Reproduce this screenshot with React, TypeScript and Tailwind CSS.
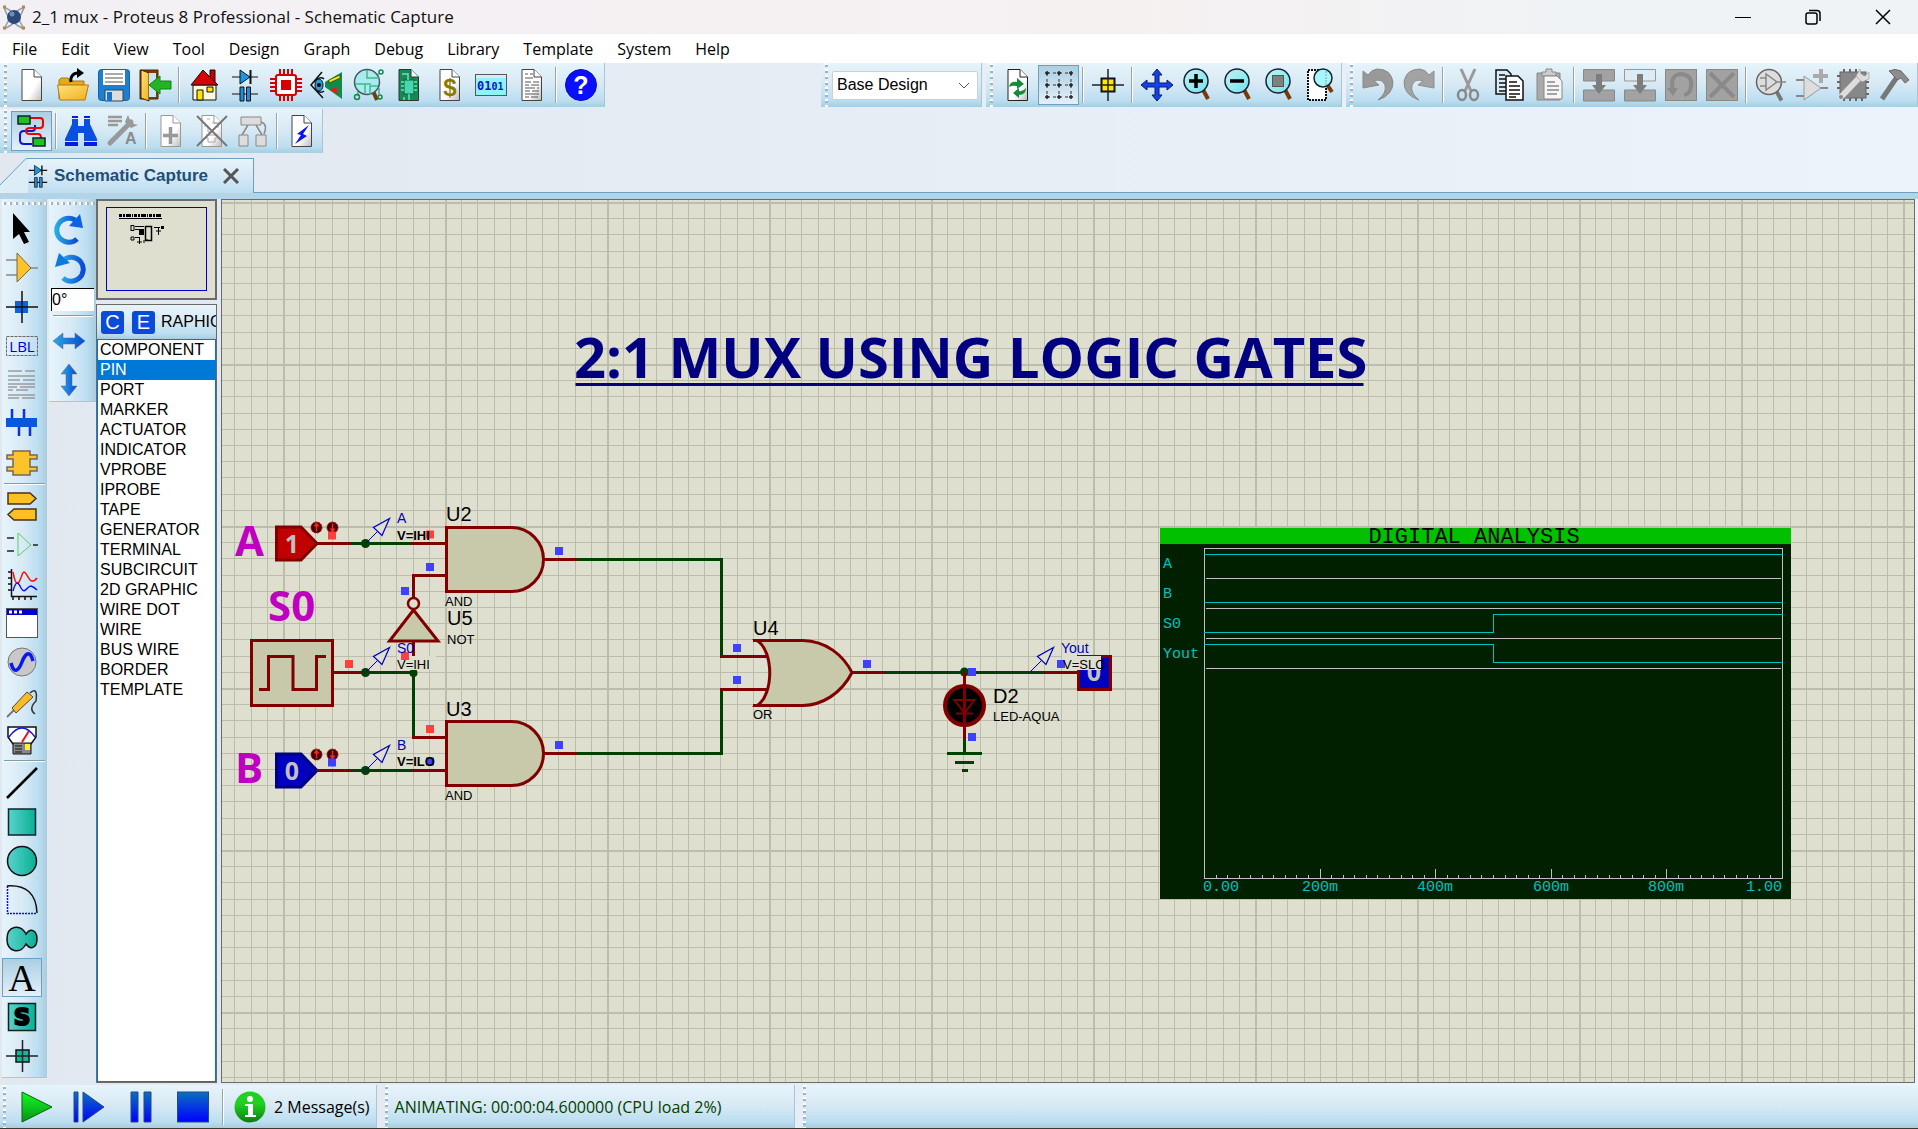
import React from "react";

const BAR =
  "bg-[linear-gradient(to_bottom,#e6f4fb_0%,#d9eaf5_45%,#bcdef1_85%,#aaccdf_100%)]";
const VBAR =
  "bg-[linear-gradient(to_right,#e6f4fb_0%,#d9eaf5_45%,#bcdef1_80%,#aaccdf_100%)]";
const PRESSED =
  "border border-[#6f9fbc] bg-[linear-gradient(to_bottom,#accfe3,#e3f0f8)]";

type IconProps = { children: React.ReactNode };
function Svg({ children }: IconProps) {
  return (
    <svg width="34" height="34" viewBox="0 0 34 34" fill="none" aria-hidden="true" className="shrink-0">
      {children}
    </svg>
  );
}

const page = "M7 1.5H19L26.5 9V32.5H7Z";
const fold = "M19 1.5V9H26.5";

function Page({ stroke = "#444", children }: { stroke?: string; children?: React.ReactNode }) {
  return (
    <>
      <path d={page} fill="url(#paper)" stroke={stroke} />
      {children}
      <path d={fold} fill="#fff" stroke={stroke} />
    </>
  );
}

function Lens({ cx = 15, cy = 13, r = 12, gray = false }: { cx?: number; cy?: number; r?: number; gray?: boolean }) {
  return (
    <>
      <path
        d={`M${cx + r * 0.6} ${cy + r * 0.75}L${cx + r} ${cy + r + 6}`}
        stroke={gray ? "#777" : "#7a3a05"}
        strokeWidth="4"
      />
      <circle cx={cx} cy={cy} r={r} fill={gray ? "#ddd" : "url(#lens)"} stroke={gray ? "#666" : "#123"} strokeWidth="1.5" />
    </>
  );
}

const diode = (
  <Svg>
    <path d="M4 9H30M4 26H30" stroke="#111" />
    <path d="M12 2V16L22 9Z" fill="#1c96e0" stroke="#111" />
    <path d="M22.5 2V16" stroke="#111" strokeWidth="2" />
    <path d="M12 19H16V33H12ZM18.500 19H22.500V33H18.500Z" fill="#1c8fe0" stroke="#111" />
  </Svg>
);

const icons: Record<string, React.ReactNode> = {
  "New project": (
    <Svg>
      <Page />
    </Svg>
  ),
  "Open project": (
    <Svg>
      <path d="M3 31V12L5 10H12L14 13H28V17" fill="#e8a818" stroke="#b07a10" />
      <path d="M1.500 17H32.500L29 32H4Z" fill="url(#gold)" stroke="#b07a10" />
      <path d="M15 14C14 9 17 5 22 5" stroke="#000" strokeWidth="3" />
      <path d="M21 0L28 5L21 10Z" fill="#000" />
    </Svg>
  ),
  "Save project": (
    <Svg>
      <rect x="1.500" y="1.500" width="31" height="31" rx="3" fill="#1c7fd0" stroke="#1b5fa8" />
      <path d="M6 2H28V17H6Z" fill="#fff" />
      <path d="M8 6H26M8 10H26M8 14H26" stroke="#555" />
      <path d="M8 22H26V33H8Z" fill="#ddd" stroke="#345" />
      <path d="M10 24H15V33H10Z" fill="#1b6fd0" />
    </Svg>
  ),
  "Close project": (
    <Svg>
      <path d="M2 2H20V31H2Z" fill="#7a3f00" stroke="#4a2800" />
      <path d="M3 2L11 5V33L3 30Z" fill="url(#gold)" stroke="#4a2800" />
      <path d="M11 5H18V29H11Z" fill="#c8e4f2" />
      <path d="M11 17L22 8V13H33V21H22V26Z" fill="#22b422" stroke="#128012" />
    </Svg>
  ),
  Home: (
    <Svg>
      <path d="M23 2H28V14H23Z" fill="#c80000" stroke="#111" />
      <path d="M6 17H29V32H6Z" fill="#fff8e0" stroke="#111" />
      <path d="M16 2L31 17H4Z" fill="#d80000" stroke="#111" />
      <path d="M10 22H16V32H10Z" fill="#ffe600" stroke="#111" />
      <path d="M20 19H26V24H20Z" fill="#ffe600" stroke="#111" />
    </Svg>
  ),
  "Schematic capture": diode,
  "PCB layout": (
    <Svg>
      <path d="M11 1V7M15 1V7M19 1V7M23 1V7M11 27V33M15 27V33M19 27V33M23 27V33M1 11H7M1 15H7M1 19H7M1 23H7M27 11H33M27 15H33M27 19H33M27 23H33" stroke="#d60000" strokeWidth="2" />
      <rect x="7" y="7" width="20" height="20" rx="2" fill="#fff" stroke="#d60000" strokeWidth="2" />
      <rect x="12" y="12" width="10" height="10" fill="#d60000" />
    </Svg>
  ),
  "3D visualizer": (
    <Svg>
      <path d="M12 4L1 17L13 30M4 14C8 9 12 9 14 11M4 20C8 25 12 25 14 23" stroke="#111" strokeWidth="1.500" />
      <ellipse cx="9" cy="17" rx="4" ry="6" fill="#2a9be0" stroke="#111" />
      <circle cx="9" cy="17" r="2" fill="#000" />
      <path d="M32 4V31L15 19V14Z" fill="#128a4a" />
      <path d="M19 12L30 7V10L19 15Z" fill="#ffe600" stroke="#111" strokeWidth=".5" />
      <path d="M20 22L26 19L28 26Z" fill="#ff1010" />
    </Svg>
  ),
  "Gerber viewer": (
    <Svg>
      <path d="M22 23L26 32" stroke="#7a3a05" strokeWidth="4" />
      <circle cx="16" cy="14" r="12.500" fill="#a9ecee" stroke="#456" strokeWidth="1.500" />
      <path d="M4 16H14V26M16 2V10H28M19 27V18H27M14 16H20" stroke="#48b490" strokeWidth="1.500" />
      <path d="M7 22V28M26 7L29 5M28 26V20" stroke="#128a4a" />
      <circle cx="6" cy="29" r="2.500" stroke="#128a4a" strokeWidth="1.500" />
      <circle cx="30" cy="4" r="2" stroke="#128a4a" strokeWidth="1.500" />
      <circle cx="29" cy="29" r="2" stroke="#128a4a" strokeWidth="1.500" />
    </Svg>
  ),
  "Design explorer": (
    <Svg>
      <path d={page} fill="#158a55" stroke="#333" />
      <path d={fold} fill="#fff" stroke="#333" />
      <rect x="12" y="12" width="10" height="14" fill="#4ad6b0" stroke="#063" />
      <path d="M9 14H12M9 18H12M9 22H12M22 14H25M22 18H25M22 22H25M10 6H16V12M12 29V32M17 26V32" stroke="#6de0c0" strokeWidth="1.500" />
    </Svg>
  ),
  "Bill of materials": (
    <Svg>
      <Page>
        <text x="17" y="28" textAnchor="middle" fontSize="24" className="fill-[#8a7a00] font-['Liberation_Sans'] font-bold">$</text>
      </Page>
    </Svg>
  ),
  "Source code": (
    <Svg>
      <rect x="1.500" y="6.500" width="31" height="21" fill="#8ff2f6" stroke="#556" />
      <path d="M2 7H32V10H2Z" fill="#e6e6e6" />
      <text x="3" y="22" fontSize="12" className="fill-[#0018c8] font-['DejaVu_Sans_Mono'] font-bold">01<tspan fontSize="10">01</tspan></text>
    </Svg>
  ),
  "Project notes": (
    <Svg>
      <Page>
        <path d="M10 6H13M15 6H18M10 10H18M10 14H16M18 14H24M10 17H14M16 17H24M10 20H20M22 20H24M10 23H15M17 23H24M10 26H24M10 29H14M16 29H23" stroke="#555" />
      </Page>
    </Svg>
  ),
  Help: (
    <Svg>
      <circle cx="17" cy="17" r="15.500" fill="#0a10ff" stroke="#0610b0" />
      <text x="17" y="26" textAnchor="middle" fontSize="25" className="fill-white font-['Liberation_Sans'] font-bold">?</text>
    </Svg>
  ),
  "Wire autorouter": (
    <Svg>
      <path d="M20 11V14Q20 17 17 17H9Q5 17 5 21V26Q5 30 9 30H17" stroke="#1010e0" strokeWidth="2" />
      <path d="M15 4H25Q28 4 28 7V11Q28 14 25 14H15Q11 14 11 17Q11 20 15 20H23Q26 20 26 24" stroke="#f00000" strokeWidth="2" />
      <path d="M3 2H15V10H3ZM18 24H30V32H18Z" fill="#1ec41e" stroke="#123" strokeWidth="1.500" />
    </Svg>
  ),
  "Search and tag": (
    <Svg>
      <path d="M8 5H14V12H20V5H26V10L33 25V27H20V19H14V27H1V25L8 10Z" fill="#0a50e0" />
      <path d="M1 28H14V32H1ZM20 28H33V32H20ZM8 2H14V4H8ZM20 2H26V4H20Z" fill="#0818e8" />
    </Svg>
  ),
  "Property assignment": (
    <Svg>
      <path d="M3 3H17M3 7H17M3 11H13" stroke="#999" strokeWidth="2.500" />
      <path d="M5 29L26 8" stroke="#999" strokeWidth="5" strokeLinecap="round" />
      <path d="M23 1L20 8L26 14L33 11L29 10L25 6Z" fill="#999" />
      <text x="20" y="30" fontSize="16" className="fill-[#8a8a8a] font-['Liberation_Sans'] font-bold">A</text>
    </Svg>
  ),
  "New sheet": (
    <Svg>
      <Page stroke="#999">
        <path d="M16.500 13V30M9 21.500H24" stroke="#999" strokeWidth="3.500" />
      </Page>
    </Svg>
  ),
  "Remove sheet": (
    <Svg>
      <Page stroke="#999">
        <path d="M12 5H15M9 12H13V18H17M17 9H23V14M9 24H13V28H20V24H24M11 21H23" stroke="#aaa" />
      </Page>
      <path d="M2 2L32 32M32 2L2 32" stroke="#777" strokeWidth="2" />
    </Svg>
  ),
  "Sheet hierarchy": (
    <Svg>
      <path d="M12 11L6 21M20 11L26 21M25 8Q32 10 28 20" stroke="#888" strokeWidth="1.500" />
      <path d="M5 3H25V11H5ZM3 21H12V32H3ZM20 21H30V32H20Z" fill="#ddd" stroke="#888" />
    </Svg>
  ),
  "Electrical rules check": (
    <Svg>
      <Page>
        <path d="M24 11L12 20L16 21L10 30L22 22L18 20Z" fill="#0a10f0" />
      </Page>
    </Svg>
  ),
  Redraw: (
    <Svg>
      <Page stroke="#222">
        <path d="M8 19Q9 13 16 14V10L23 16L16 21V18Q11 17 8 19Z" fill="#138a3c" />
        <path d="M25 20Q25 27 18 27V30L12 25L18 20V23Q22 24 25 20Z" fill="#138a3c" />
      </Page>
    </Svg>
  ),
  "Toggle grid": (
    <Svg>
      <path d="M5 5H29M5 17H29M5 29H29M5 5V29M17 5V29M29 5V29" stroke="#333" strokeDasharray="3 3" />
      <path
        d="M3 5H7M15 5H19M27 5H31M3 17H7M15 17H19M27 17H31M3 29H7M15 29H19M27 29H31M5 3V7M5 15V19M5 27V31M17 3V7M17 15V19M17 27V31M29 3V7M29 15V19M29 27V31"
        stroke="#222"
        strokeWidth="1.500"
      />
    </Svg>
  ),
  "False origin": (
    <Svg>
      <path d="M10.500 10.500H23.500V23.500H10.500Z" fill="#ffe800" stroke="#111" strokeWidth="2" />
      <path d="M1 17H33M17 1V33" stroke="#222" strokeWidth="1.500" />
    </Svg>
  ),
  "Centre at cursor": (
    <Svg>
      <path
        d="M17 1L22 7H19V15H27V12L33 17L27 22V19H19V27H22L17 33L12 27H15V19H7V22L1 17L7 12V15H15V7H12Z"
        fill="#1340f0"
        stroke="#0a1c60"
      />
    </Svg>
  ),
  "Zoom in": (
    <Svg>
      <Lens />
      <path d="M8 13H22M15 6V20" stroke="#000" strokeWidth="3.500" />
    </Svg>
  ),
  "Zoom out": (
    <Svg>
      <Lens />
      <path d="M8 13H22" stroke="#000" strokeWidth="3.500" />
    </Svg>
  ),
  "Zoom all": (
    <Svg>
      <Lens />
      <rect x="9.500" y="7.500" width="11" height="11" fill="#808080" stroke="#555" />
    </Svg>
  ),
  "Zoom area": (
    <Svg>
      <rect x="4" y="2" width="18" height="30" fill="#fff" stroke="#111" strokeWidth="2" strokeDasharray="2 1" />
      <path d="M24 18L28 24" stroke="#7a3a05" strokeWidth="4" />
      <circle cx="19" cy="10" r="9" fill="#a8f6fa" stroke="#123" strokeWidth="1.500" />
      <path d="M22 3V18" stroke="#68b0b8" strokeDasharray="2 1" />
    </Svg>
  ),
  Undo: (
    <Svg>
      <path d="M2 3V20L18 17L13 13Q21 10 24 17Q26 25 17 32Q32 27 32 14Q30 1 16 1Q10 2 7 7Z" fill="#999" stroke="#888" />
    </Svg>
  ),
  Redo: (
    <Svg>
      <path d="M32 3V20L16 17L21 13Q13 10 10 17Q8 25 17 32Q2 27 2 14Q4 1 18 1Q24 2 27 7Z" fill="#a3a3a3" stroke="#8c8c8c" />
    </Svg>
  ),
  Cut: (
    <Svg>
      <path d="M10 1L20 23M24 1L14 23" stroke="#999" strokeWidth="3" />
      <ellipse cx="11" cy="27" rx="4" ry="5" stroke="#888" strokeWidth="2.500" />
      <ellipse cx="23" cy="27" rx="4" ry="5" stroke="#888" strokeWidth="2.500" />
    </Svg>
  ),
  Copy: (
    <Svg>
      <path d="M4 2H15L19 6V26H4Z" fill="#d4eef8" stroke="#111" strokeWidth="1.500" />
      <path d="M7 7H13M7 11H16M7 15H16M7 19H16M7 23H14" stroke="#111" strokeWidth="1.500" />
      <path d="M14 8H26L31 13V32H14Z" fill="#fff" stroke="#111" strokeWidth="1.500" />
      <path d="M17 14H25M17 18H28M17 22H28M17 26H28M17 29H24" stroke="#111" strokeWidth="1.500" />
    </Svg>
  ),
  Paste: (
    <Svg>
      <path d="M4 5H27V32H4Z" fill="#aaa" stroke="#888" />
      <path d="M9 4H13V1H19V4H23V8H9Z" fill="#ccc" stroke="#888" />
      <path d="M11 8H24L29 13V31H11Z" fill="#f6f6f6" stroke="#888" />
      <path d="M14 14H22M14 18H26M14 22H26M14 26H24" stroke="#888" strokeWidth="1.500" />
    </Svg>
  ),
  "Block copy": (
    <Svg>
      <path d="M1.500 1.500H32.500V13H1.500ZM1.500 22H32.500V33H1.500Z" fill="#a2a2a2" stroke="#888" />
      <path d="M14 6H20V17H24L17 26L10 17H14Z" fill="#7d7d7d" />
    </Svg>
  ),
  "Block move": (
    <Svg>
      <path d="M1.500 22H32.500V33H1.500Z" fill="#a2a2a2" stroke="#888" />
      <path d="M1.500 1.500H32.500V13H1.500Z" fill="#dcebf4" stroke="#999" />
      <path d="M14 6H20V17H24L17 26L10 17H14Z" fill="#7d7d7d" />
    </Svg>
  ),
  "Block rotate": (
    <Svg>
      <rect x="1.500" y="1.500" width="31" height="31" fill="#a2a2a2" stroke="#888" />
      <path d="M9 23Q5 6 18 6Q29 8 27 19Q26 26 20 27" stroke="#8a8a8a" strokeWidth="4" />
      <path d="M3 20H14L9 28Z" fill="#8a8a8a" />
    </Svg>
  ),
  "Block delete": (
    <Svg>
      <rect x="1.500" y="1.500" width="31" height="31" fill="#a2a2a2" stroke="#888" />
      <path d="M5 5L29 29M29 5L5 29" stroke="#8a8a8a" strokeWidth="4" />
    </Svg>
  ),
  "Pick parts": (
    <Svg>
      <Lens cx={15} cy={14} r={12.5} gray />
      <path d="M6 10H12M6 18H12M12 6V22L23 14ZM21 14H32" stroke="#888" strokeWidth="1.500" />
    </Svg>
  ),
  "Make device": (
    <Svg>
      <path d="M1 12H9M1 28H9M24 20H33" stroke="#888" strokeWidth="2" />
      <path d="M9 8V32L26 20Z" fill="#ddd" stroke="#999" />
      <path d="M26 1V15M18 8H33" stroke="#aaa" strokeWidth="4" />
    </Svg>
  ),
  "Packaging tool": (
    <Svg>
      <path d="M8 1V4M14 1V4M20 1V4M8 30V33M14 30V33M20 30V33M26 30V33M1 8H4M1 14H4M1 20H4M30 14H33M30 20H33M30 26H33" stroke="#666" strokeWidth="2" />
      <rect x="4" y="4" width="26" height="26" fill="#888" stroke="#666" />
      <path d="M5 29L24 9" stroke="#ddd" strokeWidth="6" strokeLinecap="round" />
      <path d="M24 1L20 8L26 14L33 11V4L29 8L25 6Z" fill="#ddd" stroke="#888" strokeWidth=".5" />
      <circle cx="5" cy="29" r="2" fill="#888" />
    </Svg>
  ),
  Decompose: (
    <Svg>
      <path d="M20 9L5 31" stroke="#777" strokeWidth="5" />
      <path d="M12 3Q18 0 24 3L32 12L28 15L24 10L20 12L16 7Z" fill="#8d8d8d" stroke="#666" />
    </Svg>
  ),
  "Selection mode": (
    <Svg>
      <path d="M8 1V27L14 22L19 32L24 30L19 20L25 20Z" fill="#000" />
    </Svg>
  ),
  "Component mode": (
    <Svg>
      <path d="M1 9H12M1 24H12M24 17H33" stroke="#888" strokeWidth="1.500" />
      <path d="M12 2V31L26 17Z" fill="#fcc428" stroke="#765" />
    </Svg>
  ),
  "Junction dot mode": (
    <Svg>
      <rect x="10" y="11" width="13" height="12" fill="#0d62e0" />
      <path d="M1 17H33M17 1V33" stroke="#111" strokeWidth="1.500" />
    </Svg>
  ),
  "Wire label mode": (
    <Svg>
      <rect x="1.500" y="7.500" width="31" height="19" stroke="#666" strokeDasharray="3 1" />
      <text x="17" y="23" textAnchor="middle" fontSize="15" className="fill-[#0000d8] font-['Open_Sans'] font-medium">LBL</text>
    </Svg>
  ),
  "Text script mode": (
    <Svg>
      <path d="M3 3H17M20 3H30M3 8H30M3 12H15M18 12H30M3 16H30M3 19H12M15 19H30M3 22H8M11 22H23M3 27H30M3 30H14M17 30H30" stroke="#777" />
    </Svg>
  ),
  "Buses mode": (
    <Svg>
      <path d="M7 2V12M19 2V12M14 18V29M25 18V29" stroke="#0a30f0" strokeWidth="2.500" />
      <rect x="1" y="11" width="31" height="9" fill="#0a56dc" />
    </Svg>
  ),
  "Subcircuit mode": (
    <Svg>
      <path d="M8 5H25V9H32V13H25V21H32V25H25V29H8V25H2V21H8V13H2V9H8Z" fill="#fcc428" stroke="#765" strokeWidth="1.500" />
    </Svg>
  ),
  "Terminals mode": (
    <Svg>
      <path d="M3 4H25L31 9.500L25 15H3ZM31 20H9L3 25.500L9 31H31Z" fill="#fcbf24" stroke="#432" strokeWidth="1.500" />
    </Svg>
  ),
  "Device pins mode": (
    <Svg>
      <path d="M2 10H9M2 23H9M28 17H33" stroke="#222" strokeWidth="1.500" />
      <path d="M13 5V28L26 17Z" stroke="#58cf68" />
    </Svg>
  ),
  "Graph mode": (
    <Svg>
      <path d="M6.500 2V29.500H32M3 5H6M3 11H6M3 17H6M3 23H6M8 30V33M14 30V33M20 30V33M26 30V33" stroke="#111" strokeWidth="1.500" />
      <path d="M8 5C11 22 14 17 17 8C20 -1 23 14 27 14Q30 14 32 11" stroke="#f01010" strokeWidth="1.500" />
      <path d="M8 24C11 13 13 15 16 21C20 28 22 19 26 19Q29 20 32 23" stroke="#1010f0" strokeWidth="1.500" />
    </Svg>
  ),
  "Active popup mode": (
    <Svg>
      <rect x="1.500" y="2.500" width="31" height="29" fill="#fff" stroke="#555" />
      <path d="M2 3H32V9H2Z" fill="#0000d0" />
      <path d="M4 6H7M9 6H12M14 6H17" stroke="#fff" strokeWidth="3" />
    </Svg>
  ),
  "Generator mode": (
    <Svg>
      <circle cx="17" cy="17" r="14" fill="#c8c8c8" stroke="#777" />
      <path d="M6 18C9 30 14 25 17 17S25 4 28 16" stroke="#0818f0" strokeWidth="3.500" />
    </Svg>
  ),
  "Probe mode": (
    <Svg>
      <path d="M2 33L9 26" stroke="#777" strokeWidth="2" />
      <path d="M7 24L22 8L28 13L11 29Z" fill="#f6bc28" stroke="#543" />
      <path d="M25 9Q33 2 31 17Q23 25 30 30" stroke="#333" strokeWidth="1.500" />
    </Svg>
  ),
  "Instruments mode": (
    <Svg>
      <path d="M3 4H31V14L26 21H8L3 14Z" fill="#fff" stroke="#111" strokeWidth="1.500" />
      <path d="M4 14Q17 -4 30 14" stroke="#1010f0" strokeWidth="1.500" />
      <path d="M17 19L24 8" stroke="#f01010" strokeWidth="2" />
      <path d="M8 20H26V31H8Z" fill="#888" stroke="#111" />
      <path d="M10 23H17M10 26H17M10 29H17" stroke="#111" />
      <path d="M20 21H25V27H20Z" fill="#fff030" />
    </Svg>
  ),
  "2D line": (
    <Svg>
      <path d="M2 32L32 2" stroke="#000" strokeWidth="2.500" />
    </Svg>
  ),
  "2D box": (
    <Svg>
      <rect x="3.500" y="4" width="27" height="26" fill="url(#teal)" stroke="#123" strokeWidth="1.500" />
    </Svg>
  ),
  "2D circle": (
    <Svg>
      <circle cx="17" cy="17" r="14.500" fill="url(#teal)" stroke="#111" strokeWidth="1.500" />
    </Svg>
  ),
  "2D arc": (
    <Svg>
      <path d="M2.500 3V30.500H32" stroke="#1010e0" strokeWidth="1.500" strokeDasharray="2 1" />
      <path d="M2 3Q31 1 32 30" stroke="#111" strokeWidth="1.500" />
    </Svg>
  ),
  "2D path": (
    <Svg>
      <path d="M21 12C15 1 2 4 2 17S15 33 21 22C26 29 32 25 32 17S26 5 21 12Z" fill="url(#teal)" stroke="#111" strokeWidth="1.500" />
    </Svg>
  ),
  "2D text": (
    <Svg>
      <text x="17" y="30" textAnchor="middle" fontSize="38" className="fill-black font-['Liberation_Serif']">A</text>
    </Svg>
  ),
  "2D symbol": (
    <Svg>
      <rect x="3.500" y="3.500" width="27" height="27" fill="url(#teal)" stroke="#122" strokeWidth="1.500" />
      <text x="17" y="25" textAnchor="middle" fontSize="23" strokeWidth="2" className="fill-black stroke-black font-['DejaVu_Sans'] font-bold">S</text>
    </Svg>
  ),
  "2D marker": (
    <Svg>
      <rect x="11" y="11" width="13" height="12" fill="#10b8a0" stroke="#111" strokeWidth="1.500" />
      <path d="M1 17H33M17.500 1V33" stroke="#222" strokeWidth="1.500" />
    </Svg>
  ),
  "Rotate clockwise": (
    <Svg>
      <path d="M25 27A12 12 0 1 1 23 8" stroke="url(#blue)" strokeWidth="5" />
      <path d="M28 2L31 16L17 14Z" fill="#0c62e0" />
    </Svg>
  ),
  "Rotate anti-clockwise": (
    <Svg>
      <path d="M9 27A12 12 0 1 0 11 8" stroke="url(#blue)" strokeWidth="5" transform="translate(2 0)" />
      <path d="M7 2L3 16L18 12Z" fill="#0c7ae0" />
    </Svg>
  ),
  "X-mirror": (
    <Svg>
      <path d="M1 17L11 9V14H23V9L33 17L23 25V20H11V25Z" fill="url(#blue)" stroke="#667" strokeWidth=".5" />
    </Svg>
  ),
  "Y-mirror": (
    <Svg>
      <path d="M17 1L25 11H20V23H25L17 33L9 23H14V11H9Z" fill="url(#blue)" stroke="#667" strokeWidth=".5" />
    </Svg>
  ),
};

function ToolButton({ name, active = false, vertical = false }: { name: string; active?: boolean; vertical?: boolean }) {
  return (
    <button
      type="button"
      aria-label={name}
      title={name}
      className={`flex shrink-0 items-center justify-center ${vertical ? "h-[39px] w-10" : "h-10 w-[41px]"} ${active ? PRESSED : ""}`}
    >
      {icons[name]}
    </button>
  );
}

function Grip() {
  return (
    <span className="mr-1 w-[3px] shrink-0 self-stretch bg-[repeating-linear-gradient(to_bottom,#ffffff_0_2px,#9fb3c0_2px_4px,transparent_4px_6px)]" />
  );
}

function Rule() {
  return <span className="mx-[3px] h-9 w-[2px] shrink-0 border-l border-[#9aa3a8] bg-white" />;
}

function Strip({ groups, active, roomy = false }: { groups: string[][]; active?: string; roomy?: boolean }) {
  return (
    <div className={`flex h-11 items-center border-r border-[#a9c6d8] pl-1 ${roomy ? "pr-[3px]" : ""} ${BAR}`}>
      <Grip />
      {groups.map((group, i) => (
        <React.Fragment key={group[0]}>
          {i > 0 && <Rule />}
          {group.map((name) => (
            <ToolButton key={name} name={name} active={name === active} />
          ))}
        </React.Fragment>
      ))}
    </div>
  );
}

function Gradients() {
  return (
    <svg width="0" height="0" className="absolute" aria-hidden="true">
      <defs>
        <linearGradient id="paper" x1="0" y1="0" x2="1" y2="1">
          <stop offset=".6" stopColor="#fff" />
          <stop offset="1" stopColor="#bbb" />
        </linearGradient>
        <linearGradient id="gold" x1="0" y1="0" x2="1" y2="1">
          <stop offset="0" stopColor="#ffe27a" />
          <stop offset="1" stopColor="#f0b020" />
        </linearGradient>
        <linearGradient id="lens" x1="0" y1="0" x2="1" y2="1">
          <stop offset="0" stopColor="#c8f0f2" />
          <stop offset="1" stopColor="#6fe4ee" />
        </linearGradient>
        <linearGradient id="teal" x1="0" y1="0" x2="1" y2="0">
          <stop offset="0" stopColor="#5ad2cc" />
          <stop offset="1" stopColor="#08b094" />
        </linearGradient>
        <linearGradient id="blue" x1="0" y1="0" x2="1" y2="0">
          <stop offset="0" stopColor="#28a8e4" />
          <stop offset="1" stopColor="#0a48d8" />
        </linearGradient>
        <linearGradient id="play" x1="0" y1="0" x2="0" y2="1">
          <stop offset="0" stopColor="#10ff20" />
          <stop offset="1" stopColor="#089018" />
        </linearGradient>
        <linearGradient id="run" x1="0" y1="0" x2="0" y2="1">
          <stop offset="0" stopColor="#0a70c0" />
          <stop offset="1" stopColor="#0000ff" />
        </linearGradient>
        <linearGradient id="info" x1="0" y1="0" x2="0" y2="1">
          <stop offset=".4" stopColor="#22d022" />
          <stop offset="1" stopColor="#088008" />
        </linearGradient>
      </defs>
    </svg>
  );
}

function TitleBar() {
  return (
    <header className="flex h-[34px] items-center bg-[linear-gradient(to_right,#f3f0f5,#f6f1f1_58%,#eff3f6_85%)] font-['Open_Sans',sans-serif] text-[17px] text-[#111]">
      <svg width="24" height="30" viewBox="0 0 24 30" className="ml-[2px] shrink-0" aria-hidden="true">
        <path d="M2 5Q14 10 22 27M22 5Q10 10 2 27M2 5Q6 20 22 27M22 5Q18 20 2 27" fill="none" stroke="#98a0ac" strokeWidth="1.500" />
        <circle cx="12" cy="15" r="7" fill="#2a4878" />
        <circle cx="10" cy="12" r="2.500" fill="#6f8cba" />
        <path d="M1 5H4M20 5H23M1 26H4M20 26H23" stroke="#b48a3c" strokeWidth="3" />
      </svg>
      <h1 className="ml-[6px] whitespace-nowrap">2_1 mux - Proteus 8 Professional - Schematic Capture</h1>
      <div className="ml-auto flex h-full">
        <button type="button" aria-label="Minimize" className="flex w-[70px] items-center justify-center">
          <svg width="16" height="16" viewBox="0 0 16 16" fill="none" stroke="#000"><path d="M0 8.500H16" /></svg>
        </button>
        <button type="button" aria-label="Restore" className="flex w-[70px] items-center justify-center">
          <svg width="16" height="16" viewBox="0 0 16 16" fill="none" stroke="#000" strokeWidth="1.500">
            <rect x="1" y="4" width="11" height="11" rx="2" />
            <path d="M4 1.500H12Q15 1.500 15 4.500V12" />
          </svg>
        </button>
        <button type="button" aria-label="Close" className="flex w-[70px] items-center justify-center">
          <svg width="16" height="16" viewBox="0 0 16 16" fill="none" stroke="#000" strokeWidth="1.500"><path d="M1 1L15 15M15 1L1 15" /></svg>
        </button>
      </div>
    </header>
  );
}

const menus = ["File", "Edit", "View", "Tool", "Design", "Graph", "Debug", "Library", "Template", "System", "Help"];

function MenuBar() {
  return (
    <nav className="flex h-[29px] items-center bg-white font-['Open_Sans',sans-serif] text-base text-black">
      {menus.map((m) => (
        <button key={m} type="button" className="px-3">
          {m}
        </button>
      ))}
    </nav>
  );
}

function Toolbars() {
  return (
    <div className="flex flex-col gap-[2px]">
      <div className="flex gap-1">
        <Strip
          roomy
          groups={[
            ["New project", "Open project", "Save project", "Close project"],
            ["Home", "Schematic capture", "PCB layout", "3D visualizer", "Gerber viewer", "Design explorer", "Bill of materials", "Source code", "Project notes"],
            ["Help"],
          ]}
        />
        <div className={`ml-auto flex h-11 items-center border-r border-[#a9c6d8] pr-[3px] pl-1 ${BAR}`}>
          <Grip />
          <div className="relative">
            <select
              aria-label="Design variant"
              className="h-[29px] w-[146px] appearance-none rounded-[2px] border border-[#cfcfcf] bg-white px-1 font-['Liberation_Sans',sans-serif] text-base text-black"
            >
              <option>Base Design</option>
            </select>
            <svg width="12" height="8" viewBox="0 0 12 8" fill="none" stroke="#555" className="pointer-events-none absolute top-[11px] right-2"><path d="M1 1L6 6L11 1" /></svg>
          </div>
        </div>
        <Strip
          active="Toggle grid"
          groups={[["Redraw", "Toggle grid"], ["False origin"], ["Centre at cursor", "Zoom in", "Zoom out", "Zoom all", "Zoom area"]]}
        />
        <Strip
          roomy
          groups={[
            ["Undo", "Redo"],
            ["Cut", "Copy", "Paste"],
            ["Block copy", "Block move", "Block rotate", "Block delete"],
            ["Pick parts", "Make device", "Packaging tool", "Decompose"],
          ]}
        />
      </div>
      <div className="flex">
        <Strip
          active="Wire autorouter"
          groups={[["Wire autorouter"], ["Search and tag", "Property assignment"], ["New sheet", "Remove sheet", "Sheet hierarchy"], ["Electrical rules check"]]}
        />
      </div>
    </div>
  );
}

function TabRow() {
  return (
    <div className="mt-[5px]">
      <div className="flex h-[35px] border-b border-[#6f9fbc]">
        <svg width="28" height="35" viewBox="0 0 28 35" aria-hidden="true" className="-mb-px shrink-0">
          <path d="M0 27L27 .5H28V35H0Z" fill="#dcedf7" />
          <path d="M0 27L26 .5H28" fill="none" stroke="#6f9fbc" />
        </svg>
        <div className="-mb-px flex items-center border-t border-r border-[#6f9fbc] bg-[linear-gradient(to_bottom,#e6f4fb,#d9eaf5_45%,#bcdef1)] pr-[14px] font-['Liberation_Sans',sans-serif] text-[17px] font-bold text-[#204f78]">
          <svg width="20" height="24" viewBox="3 0 28 34" fill="none" aria-hidden="true">
            <path d="M4 9H30M4 26H30" stroke="#111" strokeWidth="1.500" />
            <path d="M12 2V16L22 9Z" fill="#1c96e0" stroke="#111" />
            <path d="M22.500 2V16" stroke="#111" strokeWidth="2" />
            <path d="M12 19H16V33H12ZM19 19H23V33H19Z" fill="#1c8fe0" stroke="#111" />
          </svg>
          <button type="button" className="ml-[6px] whitespace-nowrap">Schematic Capture</button>
          <button type="button" aria-label="Close tab" className="ml-[15px]">
            <svg width="16" height="16" viewBox="0 0 16 16" fill="none" stroke="#555" strokeWidth="3"><path d="M1 1L15 15M15 1L1 15" /></svg>
          </button>
        </div>
      </div>
      <div className="h-[6px] bg-[#b3d3e7]" />
    </div>
  );
}

const modeGroups = [
  ["Selection mode", "Component mode", "Junction dot mode", "Wire label mode", "Text script mode", "Buses mode", "Subcircuit mode"],
  ["Terminals mode", "Device pins mode", "Graph mode", "Active popup mode", "Generator mode", "Probe mode", "Instruments mode"],
  ["2D line", "2D box", "2D circle", "2D arc", "2D path", "2D text", "2D symbol", "2D marker"],
];

function HGrip() {
  return (
    <span className="mt-[3px] mb-1 h-[3px] shrink-0 self-stretch bg-[repeating-linear-gradient(to_right,#ffffff_0_2px,#9fb3c0_2px_4px,transparent_4px_6px)]" />
  );
}

function ModeBar() {
  return (
    <div className={`ml-[2px] flex w-[45px] shrink-0 flex-col self-start border-b border-[#a9c6d8] pb-[2px] ${VBAR}`}>
      <HGrip />
      {modeGroups.map((group, i) => (
        <React.Fragment key={group[0]}>
          {i > 0 && <span className="my-px ml-[2px] h-[2px] w-[41px] border-t border-[#8f989d] bg-white" />}
          {group.map((name) => (
            <ToolButton key={name} name={name} vertical active={name === "2D text"} />
          ))}
        </React.Fragment>
      ))}
    </div>
  );
}

function OrientationBar() {
  return (
    <div className={`ml-[2px] flex w-[47px] shrink-0 flex-col self-start border-b border-[#a9c6d8] pb-[2px] ${VBAR}`}>
      <HGrip />
      <ToolButton name="Rotate clockwise" vertical />
      <ToolButton name="Rotate anti-clockwise" vertical />
      <input
        aria-label="Rotation angle"
        defaultValue="0°"
        className="mt-px ml-[2px] h-[23px] w-[43px] border-t border-l border-black bg-white font-['Liberation_Sans',sans-serif] text-base text-black outline-none"
      />
      <span className="my-1 ml-1 h-[2px] w-10 border-t border-[#8f989d] bg-white" />
      <ToolButton name="X-mirror" vertical />
      <ToolButton name="Y-mirror" vertical />
    </div>
  );
}

const styles = [
  "COMPONENT", "PIN", "PORT", "MARKER", "ACTUATOR", "INDICATOR", "VPROBE", "IPROBE", "TAPE",
  "GENERATOR", "TERMINAL", "SUBCIRCUIT", "2D GRAPHIC", "WIRE DOT", "WIRE", "BUS WIRE", "BORDER", "TEMPLATE",
];

function SidePanel() {
  return (
    <aside className="flex w-[121px] shrink-0 flex-col font-['Liberation_Sans',sans-serif]">
      <div className="h-[101px] shrink-0 border-2 border-[#6b6b6b] bg-[#dfdfcf]">
        <svg width="117" height="97" viewBox="0 0 117 97" fill="none" aria-label="Sheet overview">
          <rect x="8.500" y="6.500" width="100" height="83" stroke="#0000c8" />
          <path d="M21 14.500H64" stroke="#000" strokeWidth="3" strokeDasharray="3 1 2 1 5 1 1 1" />
          <path d="M21 17.500H64M33 24V30M33 24.500H36V29.500H33M37 25.500H46M37 28.500H46M33 36H36V39H33ZM37 36.500H42M41.500 36V43M39 41H44M46 39V42M48 39H50" stroke="#000" />
          <path d="M41 29H46V34H41Z" fill="#000" />
          <rect x="47.500" y="25.500" width="6" height="14" stroke="#000" strokeWidth="1.500" />
          <path d="M56 26.500H62M60.500 26V34M58 30H63" stroke="#000" />
          <path d="M63 25H66V28H63Z" fill="#000" />
        </svg>
      </div>
      <div className="mt-1 flex min-h-0 flex-1 flex-col border border-[#6b6b6b]">
        <div className={`flex h-[34px] shrink-0 items-center overflow-hidden pl-1 text-base text-black ${BAR}`}>
          <button type="button" aria-label="Create" className="mr-2 h-[23px] w-[23px] shrink-0 rounded-[3px] bg-[#0a4bd8] text-xl leading-[23px] text-white">C</button>
          <button type="button" aria-label="Edit" className="mr-[6px] h-[23px] w-[23px] shrink-0 rounded-[3px] bg-[#0a4bd8] text-xl leading-[23px] text-white">E</button>
          <span>RAPHICS</span>
        </div>
        <ul role="listbox" aria-label="Graphic styles" className="flex-1 overflow-hidden border border-[#0078d7] bg-white text-base leading-5 text-black">
          {styles.map((s) => (
            <li key={s} role="option" aria-selected={s === "PIN"} className={s === "PIN" ? "bg-[#0078d7] pl-[2px] text-white" : "pl-[2px]"}>
              {s}
            </li>
          ))}
        </ul>
      </div>
    </aside>
  );
}

/* ---- schematic sheet ---- */

const M = "#800000";
const G = "#004000";
const minor = [16, 32, 49, 65, 81, 97, 113, 130, 146];

function Lead({ d, c = G }: { d: string; c?: string }) {
  return <path d={d} stroke={c} strokeWidth="3" fill="none" />;
}
function State({ x, y, hi = false }: { x: number; y: number; hi?: boolean }) {
  return <rect x={x - 4} y={y - 4} width="8" height="8" fill={hi ? "#ff4040" : "#4040ff"} />;
}
function Label({ x, y, size = 13, className = "fill-black", children }: { x: number; y: number; size?: number; className?: string; children: React.ReactNode }) {
  return (
    <text x={x} y={y} fontSize={size} className={`font-['Liberation_Sans'] ${className}`}>
      {children}
    </text>
  );
}
function Probe({ x, y }: { x: number; y: number }) {
  return (
    <g transform={`translate(${x} ${y})`} stroke="#0000c0" fill="none">
      <path d="M0 0L12 -12" />
      <path d="M24 -25L8 -16L16.500 -8Z" strokeWidth="1.250" fill="#dfdfcf" />
    </g>
  );
}
function AndGate({ y }: { y: number }) {
  return <path d={`M446.5 ${y}H511.5A32 32 0 0 1 511.5 ${y + 64}H446.5Z`} fill="#c8c8aa" stroke={M} strokeWidth="3" />;
}
function Toggle({ x, y, up = false }: { x: number; y: number; up?: boolean }) {
  return (
    <g transform={`translate(${x} ${y})`}>
      <circle r="5.500" fill="#400000" stroke="#c00000" strokeDasharray="2 1" />
      <path d={up ? "M0 4V-3M-2 -1L0 -4L2 -1" : "M0 -4V3M-2 1L0 4L2 1"} stroke="#ff2020" strokeWidth="1.500" fill="none" />
    </g>
  );
}
function LogicInput({ y, one = false }: { y: number; one?: boolean }) {
  return (
    <>
      <path d={`M276.500 ${y - 16.5}H301L317 ${y}L301 ${y + 16.5}H276.500Z`} fill={one ? "#c00000" : "#0000c0"} stroke={one ? M : "#000080"} strokeWidth="3" />
      <text x="292" y={y + 9} textAnchor="middle" fontSize="25" className="fill-[#c0c0c0] font-['Open_Sans'] font-bold">
        {one ? "1" : "0"}
      </text>
      <Lead d={`M317 ${y}H352M411 ${y}H446`} c={M} />
      <Lead d={`M351 ${y}H412`} />
      <Toggle x={316.5} y={y - 16} up />
      <Toggle x={332.5} y={y - 16} />
      <State x={332} y={y - 8} hi={one} />
      <State x={430} y={y - 9} hi={one} />
      <circle cx="365.500" cy={y} r="4.500" fill={G} />
      <Probe x={365.5} y={y} />
    </>
  );
}

function AnalysisGraph() {
  const ticks = Array.from({ length: 49 }, (_, i) => i + 1);
  return (
    <g>
      <rect x="1160" y="528" width="631" height="371" fill="#002000" />
      <rect x="1160" y="528" width="631" height="16" fill="#00c000" />
      <text x="1474" y="543" textAnchor="middle" fontSize="22" className="fill-black font-['Liberation_Mono']">
        DIGITAL ANALYSIS
      </text>
      <g stroke="#c0c0c0" fill="none" shapeRendering="crispEdges">
        <rect x="1204.500" y="548.500" width="578" height="330" />
        <path d="M1206 578.500H1781M1206 608.500H1781M1206 638.500H1781M1206 668.500H1781" />
        {ticks.map((t) => (
          <path key={t} d={`M${Math.round(1204 + t * 11.56) + 0.5} 878V${t % 10 === 0 ? 869 : 875}`} />
        ))}
      </g>
      <g stroke="#00c0c0" fill="none" shapeRendering="crispEdges">
        <path d="M1204 554.500H1783M1204 602.500H1783" />
        <path d="M1204 632.500H1493.500V614.500H1783" />
        <path d="M1204 644.500H1493.500V662.500H1783" />
      </g>
      <g fontSize="15" className="fill-[#00c0c0] font-['Liberation_Mono']">
        <text x="1163" y="568">A</text>
        <text x="1163" y="598">B</text>
        <text x="1163" y="628">S0</text>
        <text x="1163" y="658">Yout</text>
        <text x="1203" y="891">0.00</text>
        <text x="1302" y="891">200m</text>
        <text x="1417" y="891">400m</text>
        <text x="1533" y="891">600m</text>
        <text x="1648" y="891">800m</text>
        <text x="1746" y="891">1.00</text>
      </g>
    </g>
  );
}

function Sheet() {
  return (
    <main className="mr-[3px] ml-1 min-w-0 flex-1 overflow-hidden border border-[#6b6b6b] bg-[#dfdfcf]">
      <svg width="100%" height="100%" className="block" aria-label="2:1 mux schematic">
        <defs>
          <pattern id="grid" width="162" height="162" x="61" y="2" patternUnits="userSpaceOnUse">
            <path d="M0 0H162V2H0ZM0 0H2V162H0Z" fill="#bdbdae" />
            {minor.map((m) => (
              <path key={m} d={`M0 ${m}H162V${m + 1}H0ZM${m} 0H${m + 1}V162H${m}Z`} fill="#bdbdae" />
            ))}
          </pattern>
        </defs>
        <rect width="100%" height="100%" fill="url(#grid)" />
        <g transform="translate(-222 -200)">
          <text x="574" y="378" fontSize="56" className="fill-[#000080] font-['Open_Sans'] font-bold">
            2:1 MUX USING LOGIC GATES
          </text>
          <path d="M575.500 384.500H1363.500" stroke="#000080" strokeWidth="3" />

          <g fontSize="42" className="fill-[#c000c0] font-['Open_Sans'] font-bold">
            <text x="235" y="556">A</text>
            <text x="268" y="621">S0</text>
            <text x="235" y="783">B</text>
          </g>

          <LogicInput y={543.5} one />
          <LogicInput y={770.5} />

          <rect x="251.500" y="640.500" width="81" height="65" fill="#c8c8aa" stroke={M} strokeWidth="3" />
          <Lead d="M259 689.500H268.500V656.500H293V689.500H316.500V656.500H326" c={M} />
          <Lead d="M333 672.500H363" c={M} />
          <Lead d="M362 672.500H413.500V737" />
          <circle cx="365.500" cy="672.500" r="4.500" fill={G} />
          <circle cx="413.500" cy="673" r="4" fill={G} />
          <Lead d="M412 737.500H446" c={M} />
          <Lead d="M413.500 598V575.500H446M413.500 641V656" c={M} />
          <path d="M413.500 610L438 641H389.500Z" fill="#c8c8aa" stroke={M} strokeWidth="3" />
          <circle cx="413.500" cy="603.500" r="5.500" fill="#dfdfcf" stroke={M} strokeWidth="2.500" />
          <Probe x={365.5} y={672.5} />
          <rect x="397" y="656" width="39" height="14" fill="#dfdfcf" />
          <State x={349} y={664} hi />
          <State x={405} y={656} hi />
          <State x={405} y={591} />
          <State x={430} y={567} />
          <State x={430} y={729} hi />

          <AndGate y={527.5} />
          <AndGate y={721.5} />
          <Lead d="M543 559.500H578M543 753.500H578" c={M} />
          <Lead d="M577 559.500H721.500V656M577 753.500H721.500V690" />
          <State x={559} y={551} />
          <State x={559} y={745} />

          <Lead d="M720 656.500H770M720 689.500H770M852 672.500H886" c={M} />
          <path d="M757 640.500H803C826 641 843 655 852 672.500C841 694 822 705 803 705.500H757C774 695 774 651 757 640.500Z" fill="#c8c8aa" stroke={M} strokeWidth="3" />
          <Lead d="M753 640.500H760M753 705.500H760" c={M} />
          <State x={737} y={648} />
          <State x={737} y={680} />
          <State x={867} y={664} />

          <Lead d="M885 672.500H1045" />
          <circle cx="964.500" cy="672" r="4.500" fill={G} />
          <Lead d="M1044 672.500H1079" c={M} />
          <circle cx="964.500" cy="705.500" r="19.500" fill="#000" stroke={M} strokeWidth="4" />
          <Lead d="M964.500 672V740" c={M} />
          <path d="M954.500 700H974.500L964.500 713ZM956 713.500H973" stroke={M} strokeWidth="2" fill="none" />
          <Lead d="M964.500 739V753M947 753.500H982M955 762.500H974M962 770.500H968" />
          <State x={972} y={672} />
          <State x={972} y={737} />

          <rect x="1078.500" y="656.500" width="32" height="33" fill="#0000c0" stroke={M} strokeWidth="3" />
          <text x="1094" y="681" textAnchor="middle" fontSize="25" className="fill-[#c0c0c0] font-['Open_Sans'] font-bold">0</text>
          <rect x="1062" y="656" width="39" height="14" fill="#dfdfcf" />
          <State x={1061} y={664} />
          <Probe x={1029.5} y={672.5} />

          <Label x={446} y={521} size={20}>U2</Label>
          <Label x={445} y={606}>AND</Label>
          <Label x={447} y={625} size={20}>U5</Label>
          <Label x={447} y={644}>NOT</Label>
          <Label x={446} y={716} size={20}>U3</Label>
          <Label x={445} y={800}>AND</Label>
          <Label x={753} y={635} size={20}>U4</Label>
          <Label x={753} y={719}>OR</Label>
          <Label x={993} y={703} size={20}>D2</Label>
          <Label x={993} y={721}>LED-AQUA</Label>
          <Label x={397} y={523} size={14} className="fill-[#0000c0]">A</Label>
          <Label x={397} y={540} className="fill-black font-bold">V=IHI</Label>
          <Label x={397} y={653} size={14} className="fill-[#0000c0]">S0</Label>
          <Label x={397} y={669}>V=IHI</Label>
          <Label x={397} y={750} size={14} className="fill-[#0000c0]">B</Label>
          <Label x={397} y={766} className="fill-black font-bold">V=ILO</Label>
          <Label x={1061} y={653} size={14} className="fill-[#0000c0]">Yout</Label>
          <Label x={1063} y={669}>V=SLO</Label>

          <AnalysisGraph />
        </g>
      </svg>
    </main>
  );
}

function StatusBar() {
  return (
    <footer className="flex h-[43px] shrink-0 gap-2 font-['Open_Sans',sans-serif] text-base text-black">
      <div className={`flex items-center border-r border-[#a9c6d8] pr-[6px] pl-[3px] ${BAR}`}>
        <Grip />
        <button type="button" aria-label="Play" className="ml-[11px]">
          <svg width="32" height="32" viewBox="0 0 32 32"><path d="M1 1L31 16L1 31Z" fill="url(#play)" stroke="#086010" /></svg>
        </button>
        <button type="button" aria-label="Step" className="ml-5">
          <svg width="32" height="32" viewBox="0 0 32 32"><path d="M1 1H5V31H1ZM10 1L31 16L10 31Z" fill="url(#run)" stroke="#234a80" /></svg>
        </button>
        <button type="button" aria-label="Pause" className="ml-[25px]">
          <svg width="22" height="32" viewBox="0 0 22 32"><path d="M1 1H8V31H1ZM14 1H21V31H14Z" fill="url(#run)" stroke="#234a80" /></svg>
        </button>
        <button type="button" aria-label="Stop" className="ml-[25px]">
          <svg width="32" height="32" viewBox="0 0 32 32"><rect x=".5" y="1" width="31" height="30" fill="url(#run)" stroke="#234a80" /></svg>
        </button>
        <span className="mr-[10px] ml-[13px] h-9 w-[2px] border-l border-[#9aa3a8] bg-white" />
        <button type="button" className="flex items-center gap-2 whitespace-nowrap">
          <svg width="32" height="32" viewBox="0 0 32 32" aria-hidden="true">
            <circle cx="16" cy="16" r="15.500" fill="url(#info)" />
            <circle cx="16" cy="8" r="3" fill="#fff" />
            <path d="M11 13H19V24H22V26H11V24H14V15H11Z" fill="#fff" />
          </svg>
          2 Message(s)
        </button>
      </div>
      <div className={`flex w-[410px] items-center border-r border-[#a9c6d8] ${BAR}`}>
        <Grip />
        <span className="ml-[3px] whitespace-nowrap text-[#004000]">ANIMATING: 00:00:04.600000 (CPU load 2%)</span>
      </div>
      <div className={`flex flex-1 ${BAR}`}>
        <Grip />
      </div>
    </footer>
  );
}

export default function App() {
  return (
    <div className="flex h-screen flex-col overflow-hidden bg-[linear-gradient(to_right,#e1e8ef,#ecf3fb)]">
      <Gradients />
      <TitleBar />
      <MenuBar />
      <Toolbars />
      <TabRow />
      <div className="flex min-h-0 flex-1">
        <ModeBar />
        <OrientationBar />
        <SidePanel />
        <Sheet />
      </div>
      <div className="mt-[2px]">
        <StatusBar />
      </div>
      <div className="h-px bg-[#3a3a30]" />
    </div>
  );
}
